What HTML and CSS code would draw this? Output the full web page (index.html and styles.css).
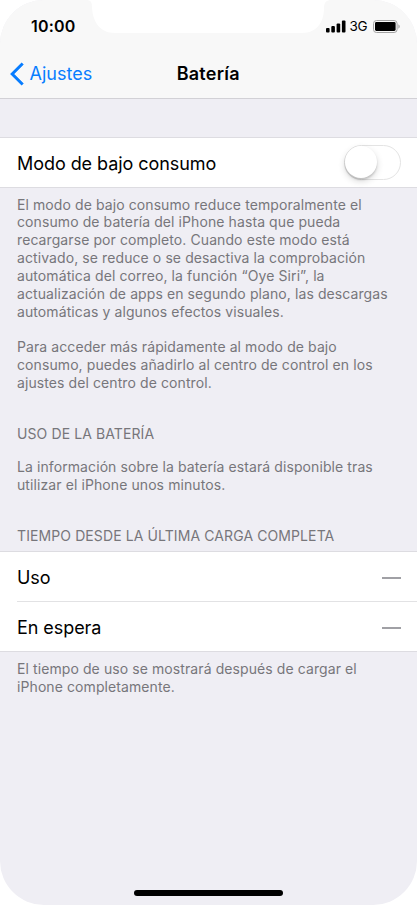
FILE: index.html
```html
<!DOCTYPE html>
<html lang="es">
<head>
<meta charset="utf-8">
<title>Batería</title>
<link rel="stylesheet" href="styles.css">
</head>
<body>
<div class="screen">
  <header class="top">
    <svg class="notch" viewBox="0 0 245 34" aria-hidden="true"><path d="M0 0C5 0 6 2 6 8C7 22 14 33 29 33H216C231 33 238 22 238 8C238 2 241 0 245 0Z" fill="#fff"/></svg>
    <div class="status">
      <span class="time">10:00</span>
      <div class="indicators">
        <svg class="signal" width="20" height="13" viewBox="0 0 20 13"><rect x="0" y="8" width="3.6" height="4.5" rx="1"/><rect x="5.3" y="6" width="3.6" height="6.5" rx="1"/><rect x="10.6" y="3.5" width="3.6" height="9" rx="1"/><rect x="15.9" y=".5" width="3.6" height="12" rx="1"/></svg>
        <span class="network">3G</span>
        <svg class="battery" width="28" height="13" viewBox="0 0 28 13"><rect x=".5" y=".5" width="23.6" height="12" rx="3" fill="none" stroke="#a3a3a3"/><rect x="2" y="2" width="20.6" height="9" rx="1.4"/><path d="M25.4 4.3C27.2 5 27.2 8 25.4 8.7Z" fill="#a3a3a3"/></svg>
      </div>
    </div>
    <nav class="navbar">
      <a class="back"><svg width="14" height="24" viewBox="0 0 14 24"><path d="M12.7 1.5L2.2 12L12.7 22.5" fill="none" stroke="#087dff" stroke-width="3"/></svg><span>Ajustes</span></a>
      <h1>Batería</h1>
    </nav>
  </header>
  <main>
    <section class="group power">
      <div class="row"><span>Modo de bajo consumo</span><span class="switch"></span></div>
    </section>
    <div class="note">
      <p>El modo de bajo consumo reduce temporalmente el<br>consumo de batería del iPhone hasta que pueda<br>recargarse por completo. Cuando este modo está<br>activado, se reduce o se desactiva la comprobación<br>automática del correo, la función “Oye Siri”, la<br>actualización de apps en segundo plano, las descargas<br>automáticas y algunos efectos visuales.</p>
      <p>Para acceder más rápidamente al modo de bajo<br>consumo, puedes añadirlo al centro de control en los<br>ajustes del centro de control.</p>
    </div>
    <h2 class="usage">USO DE LA BATERÍA</h2>
    <p class="info">La información sobre la batería estará disponible tras<br>utilizar el iPhone unos minutos.</p>
    <h2 class="since">TIEMPO DESDE LA ÚLTIMA CARGA COMPLETA</h2>
    <section class="group times">
      <div class="row"><span>Uso</span><span class="dash"></span></div>
      <div class="row"><span>En espera</span><span class="dash"></span></div>
    </section>
    <p class="footnote">El tiempo de uso se mostrará después de cargar el<br>iPhone completamente.</p>
  </main>
  <div class="home"></div>
</div>
</body>
</html>
```
FILE: styles.css
```css
* { box-sizing: border-box; }
body { margin: 0; background: #fff; font-family: Inter, "Liberation Sans", sans-serif; color: #000; }
h1, h2, p { margin: 0; }
.screen { position: relative; width: 416.5px; height: 905px; overflow: hidden; background: #efeef4; border-radius: 44px; }
.top { position: relative; height: 99px; background: #f8f8f8; border-bottom: 1px solid #d2d1d6; }
.notch { position: absolute; left: 86px; top: 0; width: 245px; height: 34px; }
.status { display: flex; justify-content: space-between; align-items: center; height: 50px; padding: 2px 16px 0 31px; }
.time { font-size: 16px; font-weight: 600; letter-spacing: 0.2px; }
.indicators { display: flex; align-items: center; }
.network { width: 23px; margin-left: 4px; font-size: 13.5px; letter-spacing: -0.3px; }
.signal, .battery { display: block; }
.navbar { display: grid; grid-template-columns: 1fr auto 1fr; align-items: center; height: 48px; padding: 0 10px; }
.back { display: flex; align-items: center; gap: 6px; margin-left: -0.5px; color: #087dff; font-size: 18px; line-height: 22px; }
.navbar h1 { font-size: 18px; font-weight: 600; line-height: 22px; letter-spacing: 0.25px; }
.group { background: #fff; border-top: 1px solid #dddce1; border-bottom: 1px solid #dddce1; }
.row { display: flex; align-items: center; justify-content: space-between; height: 50px; margin-left: 17px; padding-right: 16px; font-size: 18px; letter-spacing: -0.06px; }
.power { margin-top: 38px; }
.power .row { height: 49px; }
.row span:first-child { padding-top: 2px; }
.switch { display: block; width: 57px; height: 35px; border: 1.5px solid #e4e4e4; border-radius: 18px; }
.switch::before { content: ""; display: block; width: 32px; height: 32px; border-radius: 50%; background: #fff; box-shadow: 0 3px 7px rgba(0,0,0,.16), 0 2px 2px rgba(0,0,0,.14); }
.note, .info, .footnote { padding-left: 17px; font-size: 14px; line-height: 17.86px; letter-spacing: 0.09px; color: #77767b; white-space: nowrap; }
.note { padding-top: 7.5px; }
.note p + p { margin-top: 17.86px; }
h2 { padding-left: 17px; font-size: 14px; font-weight: 400; line-height: 18px; letter-spacing: 0.1px; color: #77767b; white-space: nowrap; }
.usage { margin-top: 33.2px; }
.info { margin-top: 15px; }
.since { margin-top: 33px; }
.times { margin-top: 6.6px; }
.times .row { height: 49px; }
.times .row + .row { height: 50px; border-top: 1px solid #e2e2e4; }
.dash { width: 19px; height: 2px; margin-top: 3px; background: #a0a0a5; }
.footnote { margin-top: 8px; }
.home { position: absolute; left: 134px; bottom: 9px; width: 149px; height: 6px; border-radius: 3px; background: #000; }
```
